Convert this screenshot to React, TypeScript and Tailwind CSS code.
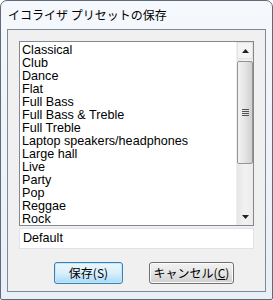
import React from "react";

const items = [
  "Classical",
  "Club",
  "Dance",
  "Flat",
  "Full Bass",
  "Full Bass & Treble",
  "Full Treble",
  "Laptop speakers/headphones",
  "Large hall",
  "Live",
  "Party",
  "Pop",
  "Reggae",
  "Rock",
];

export default function App() {
  return (
    <div
      className="w-[273px] h-[300px] bg-white"
      style={{ fontFamily: '"Liberation Sans", "Noto Sans CJK JP", sans-serif' }}
    >
      <div className="w-[273px] h-[300px] flex flex-col border border-[#5f6b78] rounded-t-[7px] rounded-b-[2px] bg-gradient-to-b from-[#f5f8fc] to-[#e9eff7] overflow-hidden">
        {/* Title bar */}
        <div className="h-[28px] flex items-center pl-[7px] shrink-0">
          <span
            className="text-[12px] text-black leading-none"
            style={{ fontFamily: '"Noto Sans CJK JP", sans-serif' }}
          >
            イコライザ プリセットの保存
          </span>
        </div>
        {/* Client area */}
        <div className="mx-[6px] h-[263px] border border-[#7f8a96] bg-[#f0f0f0] flex flex-col pt-[11px] px-[11px] shrink-0">
          {/* Listbox */}
          <div className="h-[185px] border border-[#828790] bg-white flex">
            <div className="flex-1 overflow-hidden pl-[2px] pt-[2px] text-[12.6px] leading-[13px] text-black">
              {items.map((it) => (
                <div key={it} className="h-[13px] whitespace-nowrap">
                  {it}
                </div>
              ))}
            </div>
            {/* Scrollbar */}
            <div className="w-[17px] flex flex-col bg-gradient-to-r from-[#e6e6e6] via-[#f2f2f2] to-[#ececec] border-l border-[#efefef]">
              <div className="h-[17px] flex items-center justify-center border border-[#e2e2e2] bg-[#f4f4f4]">
                <svg width="7" height="4" viewBox="0 0 7 4">
                  <path d="M3.5 0 L7 4 L0 4 Z" fill="#222" />
                </svg>
              </div>
              <div className="h-[2px]" />
              <div className="h-[103px] rounded-[2px] border border-[#959595] bg-gradient-to-r from-[#f2f2f2] via-[#e4e4e4] to-[#cfcfcf] flex items-center justify-center">
                <div className="flex flex-col gap-[1px]">
                  <div className="w-[7px] h-[1px] bg-[#555]" />
                  <div className="w-[7px] h-[1px] bg-[#555]" />
                  <div className="w-[7px] h-[1px] bg-[#555]" />
                  <div className="w-[7px] h-[1px] bg-[#555]" />
                </div>
              </div>
              <div className="flex-1" />
              <div className="h-[17px] flex items-center justify-center">
                <svg width="7" height="4" viewBox="0 0 7 4">
                  <path d="M0 0 L7 0 L3.5 4 Z" fill="#222" />
                </svg>
              </div>
            </div>
          </div>
          {/* Edit box */}
          <div className="mt-[2px] h-[21px] border border-[#dfe3e8] bg-white flex items-center pl-[3px] text-[12.6px] text-black">
            Default
          </div>
          {/* Buttons */}
          <div
            className="mt-[13px] flex pl-[35px] gap-[26px]"
            style={{ fontFamily: '"Noto Sans CJK JP", sans-serif' }}
          >
            <div className="w-[69px] h-[22px] rounded-[3px] border border-[#3c7fb1] bg-gradient-to-b from-[#eaf6fd] via-[#d9f0fc] to-[#a7d9f5] shadow-[inset_0_0_0_1px_#bfe8fb] flex items-center justify-center text-[12px] text-black leading-none">
              保存(S)
            </div>
            <div className="w-[85px] h-[22px] rounded-[3px] border border-[#707070] bg-gradient-to-b from-[#f2f2f2] via-[#e6e6e6] to-[#cfcfcf] shadow-[inset_0_0_0_1px_#fbfbfb] flex items-center justify-center text-[12px] text-black leading-none">
              キャンセル(<span className="underline">C</span>)
            </div>
          </div>
        </div>
      </div>
    </div>
  );
}
